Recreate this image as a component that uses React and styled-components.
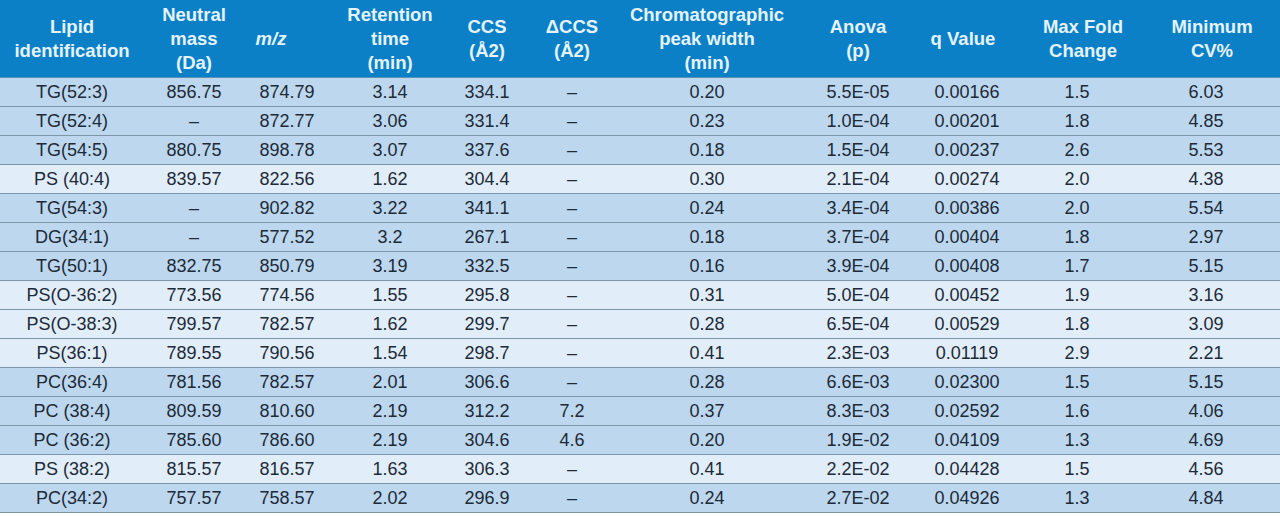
import styled, { createGlobalStyle } from "styled-components";

const GlobalStyle = createGlobalStyle`
  html, body {
    margin: 0;
    padding: 0;
    background: #ffffff;
  }
  body {
    font-family: "Liberation Sans", Arial, sans-serif;
  }
`;

const columns = "144px 100px 86px 120px 74px 96px 174px 128px 90px 130px 128px";

const headers = [
  { label: ["Lipid", "identification"] },
  { label: ["Neutral", "mass", "(Da)"] },
  { label: ["m/z"], italic: true, shift: -16 },
  { label: ["Retention", "time", "(min)"] },
  { label: ["CCS", "(Å2)"] },
  { label: ["ΔCCS", "(Å2)"] },
  { label: ["Chromatographic", "peak width", "(min)"] },
  { label: ["Anova", "(p)"] },
  { label: ["q Value"], shift: -4 },
  { label: ["Max Fold", "Change"], shift: 6 },
  { label: ["Minimum", "CV%"], shift: 6 },
];

const rows = [
  ["TG(52:3)", "856.75", "874.79", "3.14", "334.1", "–", "0.20", "5.5E-05", "0.00166", "1.5", "6.03"],
  ["TG(52:4)", "–", "872.77", "3.06", "331.4", "–", "0.23", "1.0E-04", "0.00201", "1.8", "4.85"],
  ["TG(54:5)", "880.75", "898.78", "3.07", "337.6", "–", "0.18", "1.5E-04", "0.00237", "2.6", "5.53"],
  ["PS (40:4)", "839.57", "822.56", "1.62", "304.4", "–", "0.30", "2.1E-04", "0.00274", "2.0", "4.38"],
  ["TG(54:3)", "–", "902.82", "3.22", "341.1", "–", "0.24", "3.4E-04", "0.00386", "2.0", "5.54"],
  ["DG(34:1)", "–", "577.52", "3.2", "267.1", "–", "0.18", "3.7E-04", "0.00404", "1.8", "2.97"],
  ["TG(50:1)", "832.75", "850.79", "3.19", "332.5", "–", "0.16", "3.9E-04", "0.00408", "1.7", "5.15"],
  ["PS(O-36:2)", "773.56", "774.56", "1.55", "295.8", "–", "0.31", "5.0E-04", "0.00452", "1.9", "3.16"],
  ["PS(O-38:3)", "799.57", "782.57", "1.62", "299.7", "–", "0.28", "6.5E-04", "0.00529", "1.8", "3.09"],
  ["PS(36:1)", "789.55", "790.56", "1.54", "298.7", "–", "0.41", "2.3E-03", "0.01119", "2.9", "2.21"],
  ["PC(36:4)", "781.56", "782.57", "2.01", "306.6", "–", "0.28", "6.6E-03", "0.02300", "1.5", "5.15"],
  ["PC (38:4)", "809.59", "810.60", "2.19", "312.2", "7.2", "0.37", "8.3E-03", "0.02592", "1.6", "4.06"],
  ["PC (36:2)", "785.60", "786.60", "2.19", "304.6", "4.6", "0.20", "1.9E-02", "0.04109", "1.3", "4.69"],
  ["PS (38:2)", "815.57", "816.57", "1.63", "306.3", "–", "0.41", "2.2E-02", "0.04428", "1.5", "4.56"],
  ["PC(34:2)", "757.57", "758.57", "2.02", "296.9", "–", "0.24", "2.7E-02", "0.04926", "1.3", "4.84"],
];

const Table = styled.div`
  width: 1280px;
  background: #bcd7ee;
`;

const HeaderRow = styled.div`
  display: grid;
  grid-template-columns: ${columns};
  height: 77px;
  background: #0b80c6;
  border-bottom: 1px solid #5d90b8;
`;

const HeaderCell = styled.div`
  display: flex;
  flex-direction: column;
  align-items: center;
  justify-content: center;
  padding-left: ${(p) => (p.$shift < 0 ? 0 : p.$shift * 2)}px;
  padding-right: ${(p) => (p.$shift < 0 ? -p.$shift * 2 : 0)}px;
  color: #e4f3fb;
  font-weight: bold;
  font-size: 18.5px;
  line-height: 24px;
  font-style: ${(p) => (p.$italic ? "italic" : "normal")};
  white-space: nowrap;
`;

const Row = styled.div`
  display: grid;
  grid-template-columns: ${columns};
  height: 28px;
  background: ${(p) => (p.$light ? "#e1edf8" : "#bcd7ee")};
  border-bottom: 1px solid #7e95a8;
`;

const Cell = styled.div`
  display: flex;
  align-items: center;
  justify-content: center;
  color: #1d2a38;
  font-size: 18px;
  white-space: nowrap;
`;

export default function App() {
  return (
    <>
      <GlobalStyle />
      <Table>
        <HeaderRow>
          {headers.map((h, i) => (
            <HeaderCell key={i} $italic={h.italic} $shift={h.shift || 0}>
              {h.label.map((line) => (
                <span key={line}>{line}</span>
              ))}
            </HeaderCell>
          ))}
        </HeaderRow>
        {rows.map((r) => (
          <Row key={r[0]} $light={r[0].startsWith("PS")}>
            {r.map((v, i) => (
              <Cell key={i}>{v}</Cell>
            ))}
          </Row>
        ))}
      </Table>
    </>
  );
}
